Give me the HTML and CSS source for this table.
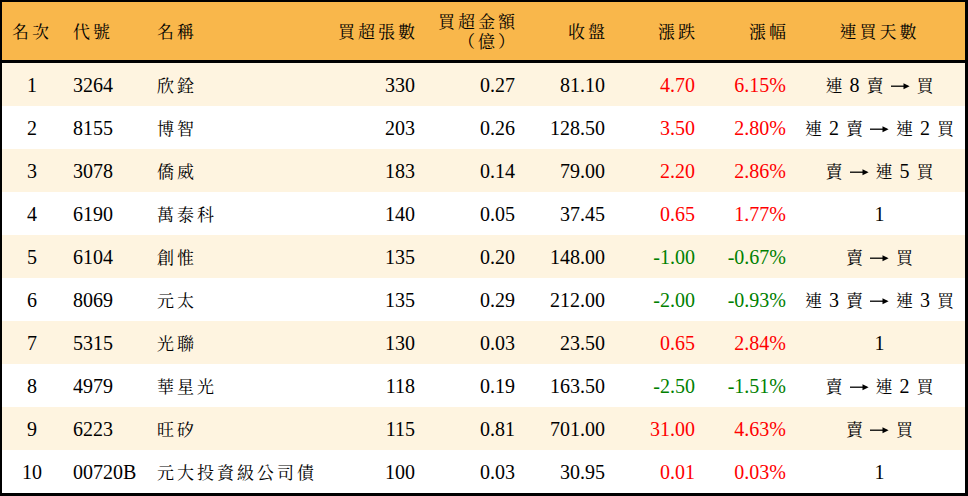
FILE: index.html
```html
<!DOCTYPE html>
<html lang="zh-Hant">
<head>
<meta charset="utf-8">
<link rel="stylesheet" href="styles.css">
</head>
<body>
<table class="board">
  <colgroup>
    <col class="c-rank"><col class="c-code"><col class="c-name"><col class="c-vol"><col class="c-amt"><col class="c-close"><col class="c-chg"><col class="c-pct"><col class="c-days">
  </colgroup>
  <thead>
    <tr>
      <th class="center"><span class="zh">名次</span></th>
      <th class="left"><span class="zh">代號</span></th>
      <th class="left"><span class="zh">名稱</span></th>
      <th class="right"><span class="zh">買超張數</span></th>
      <th class="right"><span class="zh">買超金額</span><br><span class="zh">（億）</span></th>
      <th class="right"><span class="zh">收盤</span></th>
      <th class="right"><span class="zh">漲跌</span></th>
      <th class="right"><span class="zh">漲幅</span></th>
      <th class="center"><span class="zh">連買天數</span></th>
    </tr>
  </thead>
  <tbody>
    <tr><td class="center">1</td><td class="left">3264</td><td class="left"><span class="zh">欣銓</span></td><td class="right">330</td><td class="right">0.27</td><td class="right">81.10</td><td class="right up">4.70</td><td class="right up">6.15%</td><td class="center days"><span class="zh">連</span> 8 <span class="zh">賣</span> <svg class="arr" viewBox="0 0 19 10" aria-label="→"><path d="M0 5.2H16.5" stroke="#000" stroke-width="1.3" fill="none"/><path d="M12.5 2.2L18.6 5.2L12.5 8.2Z" fill="#000"/></svg> <span class="zh">買</span></td></tr>
    <tr><td class="center">2</td><td class="left">8155</td><td class="left"><span class="zh">博智</span></td><td class="right">203</td><td class="right">0.26</td><td class="right">128.50</td><td class="right up">3.50</td><td class="right up">2.80%</td><td class="center days"><span class="zh">連</span> 2 <span class="zh">賣</span> <svg class="arr" viewBox="0 0 19 10" aria-label="→"><path d="M0 5.2H16.5" stroke="#000" stroke-width="1.3" fill="none"/><path d="M12.5 2.2L18.6 5.2L12.5 8.2Z" fill="#000"/></svg> <span class="zh">連</span> 2 <span class="zh">買</span></td></tr>
    <tr><td class="center">3</td><td class="left">3078</td><td class="left"><span class="zh">僑威</span></td><td class="right">183</td><td class="right">0.14</td><td class="right">79.00</td><td class="right up">2.20</td><td class="right up">2.86%</td><td class="center days"><span class="zh">賣</span> <svg class="arr" viewBox="0 0 19 10" aria-label="→"><path d="M0 5.2H16.5" stroke="#000" stroke-width="1.3" fill="none"/><path d="M12.5 2.2L18.6 5.2L12.5 8.2Z" fill="#000"/></svg> <span class="zh">連</span> 5 <span class="zh">買</span></td></tr>
    <tr><td class="center">4</td><td class="left">6190</td><td class="left"><span class="zh">萬泰科</span></td><td class="right">140</td><td class="right">0.05</td><td class="right">37.45</td><td class="right up">0.65</td><td class="right up">1.77%</td><td class="center days">1</td></tr>
    <tr><td class="center">5</td><td class="left">6104</td><td class="left"><span class="zh">創惟</span></td><td class="right">135</td><td class="right">0.20</td><td class="right">148.00</td><td class="right down">-1.00</td><td class="right down">-0.67%</td><td class="center days"><span class="zh">賣</span> <svg class="arr" viewBox="0 0 19 10" aria-label="→"><path d="M0 5.2H16.5" stroke="#000" stroke-width="1.3" fill="none"/><path d="M12.5 2.2L18.6 5.2L12.5 8.2Z" fill="#000"/></svg> <span class="zh">買</span></td></tr>
    <tr><td class="center">6</td><td class="left">8069</td><td class="left"><span class="zh">元太</span></td><td class="right">135</td><td class="right">0.29</td><td class="right">212.00</td><td class="right down">-2.00</td><td class="right down">-0.93%</td><td class="center days"><span class="zh">連</span> 3 <span class="zh">賣</span> <svg class="arr" viewBox="0 0 19 10" aria-label="→"><path d="M0 5.2H16.5" stroke="#000" stroke-width="1.3" fill="none"/><path d="M12.5 2.2L18.6 5.2L12.5 8.2Z" fill="#000"/></svg> <span class="zh">連</span> 3 <span class="zh">買</span></td></tr>
    <tr><td class="center">7</td><td class="left">5315</td><td class="left"><span class="zh">光聯</span></td><td class="right">130</td><td class="right">0.03</td><td class="right">23.50</td><td class="right up">0.65</td><td class="right up">2.84%</td><td class="center days">1</td></tr>
    <tr><td class="center">8</td><td class="left">4979</td><td class="left"><span class="zh">華星光</span></td><td class="right">118</td><td class="right">0.19</td><td class="right">163.50</td><td class="right down">-2.50</td><td class="right down">-1.51%</td><td class="center days"><span class="zh">賣</span> <svg class="arr" viewBox="0 0 19 10" aria-label="→"><path d="M0 5.2H16.5" stroke="#000" stroke-width="1.3" fill="none"/><path d="M12.5 2.2L18.6 5.2L12.5 8.2Z" fill="#000"/></svg> <span class="zh">連</span> 2 <span class="zh">買</span></td></tr>
    <tr><td class="center">9</td><td class="left">6223</td><td class="left"><span class="zh">旺矽</span></td><td class="right">115</td><td class="right">0.81</td><td class="right">701.00</td><td class="right up">31.00</td><td class="right up">4.63%</td><td class="center days"><span class="zh">賣</span> <svg class="arr" viewBox="0 0 19 10" aria-label="→"><path d="M0 5.2H16.5" stroke="#000" stroke-width="1.3" fill="none"/><path d="M12.5 2.2L18.6 5.2L12.5 8.2Z" fill="#000"/></svg> <span class="zh">買</span></td></tr>
    <tr><td class="center">10</td><td class="left">00720B</td><td class="left"><span class="zh">元大投資級公司債</span></td><td class="right">100</td><td class="right">0.03</td><td class="right">30.95</td><td class="right up">0.01</td><td class="right up">0.03%</td><td class="center days">1</td></tr>
  </tbody>
</table>
</body>
</html>
```

FILE: styles.css
```css
html, body {
  margin: 0;
  padding: 0;
  background: #ffffff;
}

.board {
  width: 968px;
  border-collapse: separate;
  border-spacing: 0;
  table-layout: fixed;
  border-style: solid;
  border-color: #000000;
  border-width: 2px 3px 3px 2px;
  box-sizing: border-box;
  font-family: "Liberation Serif", "Noto Serif CJK TC", "Noto Sans CJK TC", serif;
  font-size: 20px;
  color: #000000;
}

.c-rank { width: 60px; }
.c-code { width: 84px; }
.c-name { width: 177px; }
.c-vol { width: 100px; }
.c-amt { width: 100px; }
.c-close { width: 90px; }
.c-chg { width: 90px; }
.c-pct { width: 91px; }
.c-days { width: 171px; }

.board th {
  background: #f9b74b;
  height: 61px;
  padding: 0 8px;
  font-weight: normal;
  line-height: 20px;
  vertical-align: middle;
  border-bottom: 3px solid #000000;
  box-sizing: border-box;
}

.board td {
  height: 43px;
  padding: 0 8px;
  line-height: 20px;
  vertical-align: middle;
  white-space: nowrap;
  box-sizing: border-box;
}

.board tbody tr:nth-child(odd) td {
  background: #fef4e0;
}

.board tbody tr:nth-child(even) td {
  background: #ffffff;
}

.board th.left,
.board td.left {
  text-align: left;
  padding-left: 11px;
}

.board .right { text-align: right; }
.board .center { text-align: center; }

.zh {
  font-family: "Noto Serif CJK TC", "Noto Sans CJK TC", sans-serif;
  font-size: 17px;
  letter-spacing: 3px;
}

.right .zh {
  margin-right: -3px;
}

.days {
  word-spacing: 2px;
}

.days .zh {
  letter-spacing: 0;
}

.arr {
  width: 19px;
  height: 10px;
  vertical-align: 1px;
}

.up { color: #ff0000; }
.down { color: #008000; }
```
